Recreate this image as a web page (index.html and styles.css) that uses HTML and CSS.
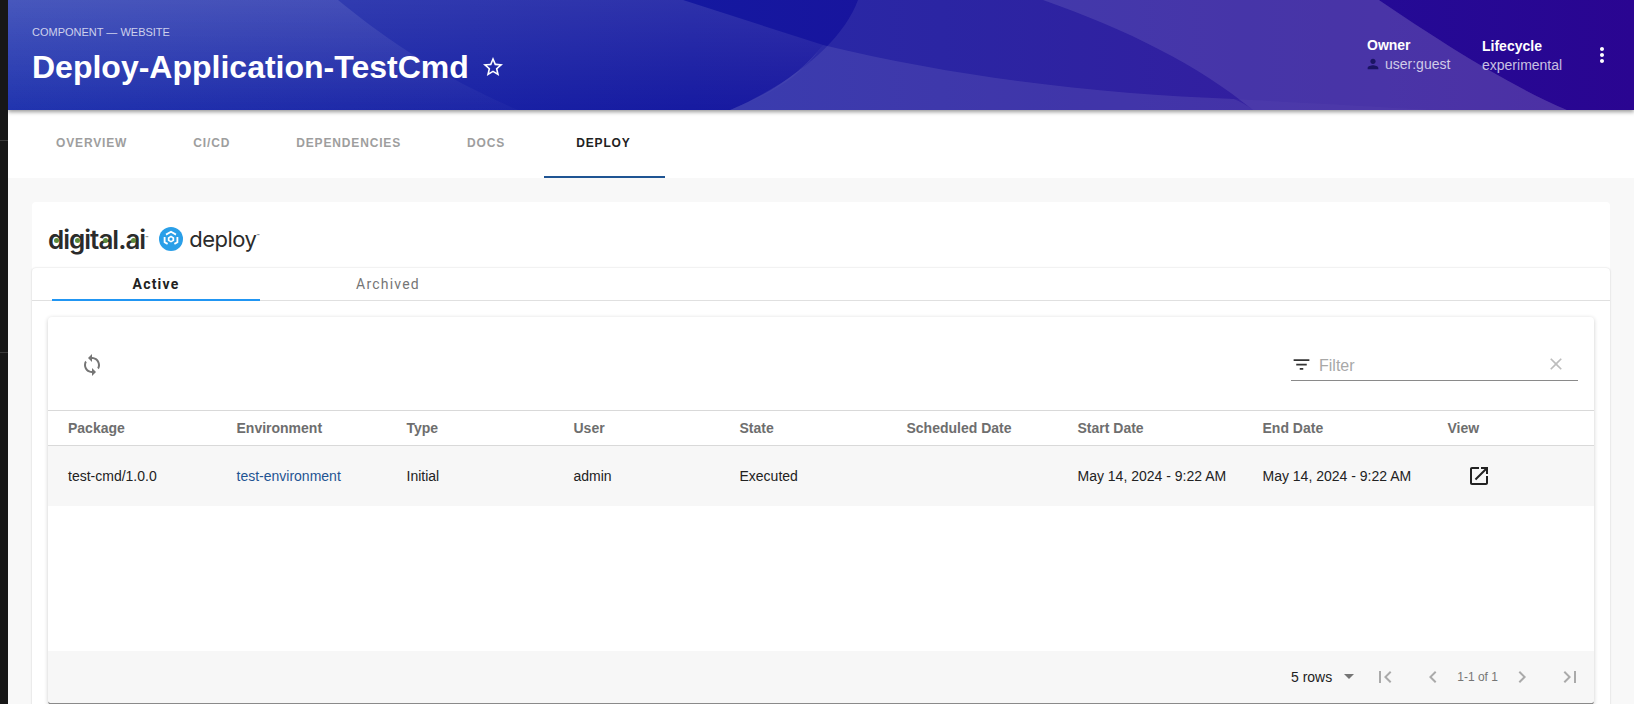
FILE: index.html
```html
<!DOCTYPE html>
<html lang="en">
<head>
    <meta charset="UTF-8">
    <title>Deploy-Application-TestCmd</title>
    <link rel="stylesheet" href="styles.css">
</head>
<body>
<aside class="side-strip">
    <div class="side-top"></div>
    <div class="side-mid"></div>
</aside>
<div class="page">
    <!-- Banner -->
    <header class="banner">
        <svg class="banner-art" viewBox="0 0 1626 110" preserveAspectRatio="none">
            <defs>
                <linearGradient id="bannerBg" x1="0" y1="0" x2="1" y2="0">
                    <stop offset="0" stop-color="#1a2eac"/>
                    <stop offset="0.42" stop-color="#1418a0"/>
                    <stop offset="1" stop-color="#2a0591"/>
                </linearGradient>
                <linearGradient id="fadeLeft" x1="0" y1="0" x2="0" y2="1">
                    <stop offset="0" stop-color="#fff" stop-opacity="0.11"/>
                    <stop offset="1" stop-color="#fff" stop-opacity="0.01"/>
                </linearGradient>
                <linearGradient id="fadeCorner" x1="0" y1="0" x2="0" y2="1">
                    <stop offset="0" stop-color="#fff" stop-opacity="0.1"/>
                    <stop offset="1" stop-color="#fff" stop-opacity="0.02"/>
                </linearGradient>
            </defs>
            <rect width="1626" height="110" fill="url(#bannerBg)"/>
            <path d="M0 0H675L815 45C790 80 760 95 722 110H0Z" fill="url(#fadeLeft)"/>
            <path d="M0 0H330C385 45 440 80 510 110H0Z" fill="url(#fadeCorner)"/>
            <path d="M850 0C835 40 790 80 722 110H1559C1500 85 1430 40 1371 0Z" fill="#fff" fill-opacity="0.08"/>
            <path d="M815 45C960 80 1100 94 1226 99C1234 102 1240 106 1245 110H722C770 90 795 70 815 45Z" fill="#fff" fill-opacity="0.09"/>
            <path d="M1035 0C1120 30 1190 65 1245 110H1559C1500 85 1430 40 1371 0Z" fill="#fff" fill-opacity="0.1"/>
            <path d="M1226 99C1300 103 1360 106 1423 110H1245C1240 106 1234 102 1226 99Z" fill="#fff" fill-opacity="0.025"/>
        </svg>
        <div class="banner-left">
            <div class="banner-type">COMPONENT — WEBSITE</div>
            <div class="banner-title-row">
                <h1 class="banner-title">Deploy-Application-TestCmd</h1>
                <svg class="star-icon" viewBox="0 0 24 24"><path fill="#fff" d="M22 9.24l-7.19-.62L12 2 9.19 8.63 2 9.24l5.46 4.73L5.82 21 12 17.27 18.18 21l-1.63-7.03L22 9.24zM12 15.4l-3.76 2.27 1-4.28-3.32-2.88 4.38-.38L12 6.1l1.71 4.04 4.38.38-3.32 2.88 1 4.28L12 15.4z"/></svg>
            </div>
        </div>
        <div class="banner-right">
            <div class="meta meta-owner">
                <div class="meta-label">Owner</div>
                <div class="meta-value">
                    <svg class="user-icon" viewBox="0 0 24 24"><path fill="#1b1464" d="M12 12c2.21 0 4-1.79 4-4s-1.79-4-4-4-4 1.79-4 4 1.79 4 4 4zm0 2c-2.67 0-8 1.34-8 4v2h16v-2c0-2.66-5.33-4-8-4z"/></svg>
                    user:guest
                </div>
            </div>
            <div class="meta meta-life">
                <div class="meta-label">Lifecycle</div>
                <div class="meta-value">experimental</div>
            </div>
            <svg class="more-icon" viewBox="0 0 24 24"><path fill="#fff" d="M12 8c1.1 0 2-.9 2-2s-.9-2-2-2-2 .9-2 2 .9 2 2 2zm0 2c-1.1 0-2 .9-2 2s.9 2 2 2 2-.9 2-2-.9-2-2-2zm0 6c-1.1 0-2 .9-2 2s.9 2 2 2 2-.9 2-2-.9-2-2-2z"/></svg>
        </div>
    </header>

    <!-- Main tabs -->
    <nav class="main-tabs">
        <a class="main-tab">Overview</a>
        <a class="main-tab">CI/CD</a>
        <a class="main-tab">Dependencies</a>
        <a class="main-tab">Docs</a>
        <a class="main-tab active">Deploy</a>
    </nav>

    <main class="content">
        <section class="card">
            <div class="logo-row">
                <span class="logo-digital">digital.ai<sup>™</sup>
                    <i class="logo-dot dot-d"></i>
                    <i class="logo-dot dot-g"></i>
                    <i class="logo-dot dot-a"></i>
                    <i class="logo-dot dot-a2"></i>
                </span>
                <svg class="logo-mark" viewBox="0 0 24 24">
                    <circle cx="12" cy="12" r="12" fill="#2a9fe8"/>
                    <path d="M7 7.6L12 4.8l5 2.8" fill="none" stroke="#fff" stroke-width="1.8"/>
                    <path d="M5.6 10v5.2l3 1.7M18.4 10v5.2l-3 1.7" fill="none" stroke="#fff" stroke-width="1.8"/>
                    <path d="M12 8.6l3.2 1.8v3.4L12 15.6l-3.2-1.8v-3.4z" fill="#fff"/>
                    <circle cx="12" cy="12.1" r="1.6" fill="#2a9fe8"/>
                </svg>
                <span class="logo-deploy">deploy<sup>™</sup></span>
            </div>

            <div class="tabs-panel">
                <div class="sub-tabs">
                    <a class="sub-tab active">Active</a>
                    <a class="sub-tab">Archived</a>
                </div>

                <div class="table-card">
                    <div class="toolbar">
                        <svg class="sync-icon" viewBox="0 0 24 24"><path fill="#757575" d="M12 4V1L8 5l4 4V6c3.31 0 6 2.69 6 6 0 1.01-.25 1.97-.7 2.8l1.46 1.46C19.54 15.03 20 13.57 20 12c0-4.42-3.58-8-8-8zm0 14c-3.31 0-6-2.69-6-6 0-1.01.25-1.97.7-2.8L5.24 7.74C4.46 8.97 4 10.43 4 12c0 4.42 3.58 8 8 8v3l4-4-4-4v3z"/></svg>
                        <div class="filter">
                            <svg class="filter-icon" viewBox="0 0 24 24"><path fill="#333" d="M10 18h4v-2h-4v2zM3 6v2h18V6H3zm3 7h12v-2H6v2z"/></svg>
                            <span class="filter-text">Filter</span>
                            <svg class="clear-icon" viewBox="0 0 24 24"><path fill="#bdbdbd" d="M19 6.41L17.59 5 12 10.59 6.41 5 5 6.41 10.59 12 5 17.59 6.41 19 12 13.41 17.59 19 19 17.59 13.41 12z"/></svg>
                        </div>
                    </div>

                    <table class="data-table">
                        <thead>
                        <tr>
                            <th class="col-package">Package</th>
                            <th class="col-env">Environment</th>
                            <th class="col-type">Type</th>
                            <th class="col-user">User</th>
                            <th class="col-state">State</th>
                            <th class="col-sched">Scheduled Date</th>
                            <th class="col-start">Start Date</th>
                            <th class="col-end">End Date</th>
                            <th>View</th>
                        </tr>
                        </thead>
                        <tbody>
                        <tr>
                            <td>test-cmd/1.0.0</td>
                            <td><a class="link">test-environment</a></td>
                            <td>Initial</td>
                            <td>admin</td>
                            <td>Executed</td>
                            <td></td>
                            <td>May 14, 2024 - 9:22 AM</td>
                            <td>May 14, 2024 - 9:22 AM</td>
                            <td><svg class="open-icon" viewBox="0 0 24 24"><path fill="#222" d="M19 19H5V5h7V3H5c-1.11 0-2 .9-2 2v14c0 1.1.89 2 2 2h14c1.1 0 2-.9 2-2v-7h-2v7zM14 3v2h3.59l-9.83 9.83 1.41 1.41L19 6.41V10h2V3h-7z"/></svg></td>
                        </tr>
                        </tbody>
                    </table>

                    <div class="table-footer">
                        <span class="rows-select">5 rows</span>
                        <span class="rows-caret"></span>
                        <svg class="page-icon first" viewBox="0 0 24 24"><path fill="#aaa" d="M18.41 16.59L13.82 12l4.59-4.59L17 6l-6 6 6 6zM6 6h2v12H6z"/></svg>
                        <svg class="page-icon prev" viewBox="0 0 24 24"><path fill="#aaa" d="M15.41 7.41L14 6l-6 6 6 6 1.41-1.41L10.83 12z"/></svg>
                        <span class="page-count">1-1 of 1</span>
                        <svg class="page-icon next" viewBox="0 0 24 24"><path fill="#aaa" d="M10 6L8.59 7.41 13.17 12l-4.58 4.59L10 18l6-6z"/></svg>
                        <svg class="page-icon last" viewBox="0 0 24 24"><path fill="#aaa" d="M5.59 7.41L10.18 12l-4.59 4.59L7 18l6-6-6-6zM16 6h2v12h-2z"/></svg>
                    </div>
                </div>
            </div>
        </section>
    </main>
</div>
</body>
</html>
```

FILE: styles.css
```css
* {
    box-sizing: border-box;
}

html, body {
    height: 704px;
    overflow: hidden;
}

body {
    margin: 0;
    display: flex;
    background-color: #171717;
    font-family: "Liberation Sans", sans-serif;
    color: #222;
}

.side-strip {
    width: 8px;
    flex-shrink: 0;
}

.side-top {
    height: 141px;
    border-bottom: 1px solid #3a3a3a;
}

.side-mid {
    height: 212px;
    border-bottom: 1px solid #3a3a3a;
}

.page {
    flex: 1;
    height: 704px;
    overflow: hidden;
    background-color: #f8f8f8;
    display: flex;
    flex-direction: column;
}

.banner {
    position: relative;
    height: 110px;
    flex-shrink: 0;
    display: flex;
    justify-content: space-between;
    padding: 0 20px 0 24px;
    color: #fff;
    box-shadow: 0 2px 4px rgba(0, 0, 0, 0.4);
    z-index: 2;
}

.banner-art {
    position: absolute;
    top: 0;
    left: 0;
    width: 100%;
    height: 100%;
}

.banner-left,
.banner-right {
    position: relative;
}

.banner-type {
    margin-top: 26px;
    font-size: 11px;
    line-height: 13px;
    color: rgba(255, 255, 255, 0.75);
}

.banner-title-row {
    display: flex;
    align-items: center;
    margin-top: 8px;
}

.banner-title {
    margin: 0;
    font-size: 32px;
    line-height: 40px;
    font-weight: 700;
}

.star-icon {
    width: 24px;
    height: 24px;
    margin-left: 12px;
}

.banner-right {
    display: flex;
    align-items: flex-start;
}

.meta-label {
    font-size: 14px;
    line-height: 17px;
    font-weight: 700;
}

.meta-value {
    display: flex;
    align-items: center;
    font-size: 14px;
    line-height: 20px;
    color: rgba(255, 255, 255, 0.75);
}

.meta-owner {
    margin-top: 37px;
    width: 115px;
}

.meta-life {
    margin-top: 38px;
    width: 107px;
}

.user-icon {
    width: 16px;
    height: 16px;
    margin: 0 4px 0 -2px;
}

.more-icon {
    width: 24px;
    height: 24px;
    margin: 43px 0 0 1px;
}

.main-tabs {
    height: 68px;
    flex-shrink: 0;
    background-color: #fff;
    display: flex;
    padding-left: 16px;
}

.main-tab {
    display: flex;
    align-items: center;
    padding: 0 34px 0 32px;
    font-size: 12px;
    font-weight: 700;
    letter-spacing: 0.85px;
    text-transform: uppercase;
    color: #9e9e9e;
    border-bottom: 2px solid transparent;
}

.main-tab.active {
    margin-left: 5px;
    color: #222;
    border-bottom-color: #1f5493;
}

.content {
    padding: 24px 24px 0;
    flex: 1;
}

.card {
    background-color: #fff;
    border-radius: 4px;
    height: 600px;
}

.logo-row {
    height: 66px;
    display: flex;
    align-items: center;
    padding: 8px 0 0 16px;
    color: #2b2b2b;
}

.logo-row sup {
    font-size: 5px;
    font-weight: 400;
    vertical-align: 9px;
    line-height: 0;
}

.logo-digital {
    position: relative;
    font-family: Inter, sans-serif;
    font-size: 26px;
    font-weight: 600;
    letter-spacing: -1px;
}

.logo-dot {
    position: absolute;
    top: 14px;
    width: 5px;
    height: 5px;
    border-radius: 50%;
    background-color: #5c8a3a;
}

.dot-d { left: 6px; }
.dot-g { left: 27px; }
.dot-a { left: 55px; }
.dot-a2 { left: 83px; }

.logo-mark {
    width: 24px;
    height: 24px;
    margin-left: 12px;
}

.logo-deploy {
    margin-left: 6px;
    font-family: Inter, sans-serif;
    font-size: 22px;
    font-weight: 400;
    letter-spacing: -0.5px;
}

.tabs-panel {
    height: 534px;
    border-radius: 4px 4px 0 0;
    box-shadow: 0 0 2px rgba(0, 0, 0, 0.2);
}

.sub-tabs {
    height: 33px;
    display: flex;
    padding-left: 20px;
    border-bottom: 1px solid #e0e0e0;
}

.sub-tab {
    width: 208px;
    display: flex;
    align-items: center;
    justify-content: center;
    font-family: Roboto, sans-serif;
    font-size: 14px;
    letter-spacing: 1.2px;
    color: #757575;
}

.sub-tab + .sub-tab {
    margin-left: 24px;
}

.sub-tab.active {
    font-weight: 700;
    color: #222;
    border-bottom: 2px solid #2196f3;
    margin-bottom: -1px;
}

.table-card {
    margin: 16px 16px 0;
    background-color: #fff;
    border-radius: 4px;
    box-shadow: 0 1px 4px rgba(0, 0, 0, 0.2);
}

.toolbar {
    height: 93px;
    display: flex;
    align-items: center;
    justify-content: space-between;
    padding: 0 16px 0 32px;
}

.sync-icon {
    width: 24px;
    height: 24px;
    margin-top: 2px;
}

.filter {
    width: 287px;
    height: 34px;
    display: flex;
    align-items: center;
    border-bottom: 1px solid #8a8a8a;
    padding: 2px 12px 0 0;
}

.filter-icon {
    width: 21px;
    height: 21px;
}

.filter-text {
    flex: 1;
    margin: 3px 0 0 7px;
    font-size: 16px;
    color: #a8a8a8;
}

.clear-icon {
    width: 20px;
    height: 20px;
}

.data-table {
    width: 100%;
    border-collapse: collapse;
    table-layout: fixed;
    border-top: 1px solid #d9d9d9;
    font-size: 14px;
}

.data-table th {
    height: 35px;
    padding: 0 0 0 20px;
    text-align: left;
    font-size: 14px;
    font-weight: 700;
    color: #6e6e6e;
    border-bottom: 1px solid #d9d9d9;
}

.data-table td {
    height: 60px;
    padding: 0 0 0 20px;
    background-color: #f7f7f7;
}

.col-package { width: 168.5px; }
.col-env { width: 170px; }
.col-type { width: 167px; }
.col-user { width: 166px; }
.col-state { width: 167px; }
.col-sched { width: 171px; }
.col-start { width: 185px; }
.col-end { width: 185px; }

.link {
    color: #1f5493;
}

.open-icon {
    display: block;
    width: 24px;
    height: 24px;
    margin-left: 19px;
}

.table-footer {
    margin-top: 145px;
    height: 54px;
    background-color: #f7f7f7;
    display: flex;
    align-items: center;
    padding-left: 1243px;
    font-size: 14px;
    border-bottom: 2px solid #8a8a8a;
    border-radius: 0 0 4px 4px;
}

.rows-caret {
    margin-left: 12px;
    border-left: 5px solid transparent;
    border-right: 5px solid transparent;
    border-top: 5px solid #757575;
}

.page-icon {
    width: 24px;
    height: 24px;
}

.page-icon.first {
    margin-left: 19px;
}

.page-icon.prev {
    margin-left: 24px;
}

.page-count {
    margin-left: 12px;
    font-size: 12px;
    color: #757575;
}

.page-icon.next {
    margin-left: 12px;
}

.page-icon.last {
    margin-left: 24px;
}
```
